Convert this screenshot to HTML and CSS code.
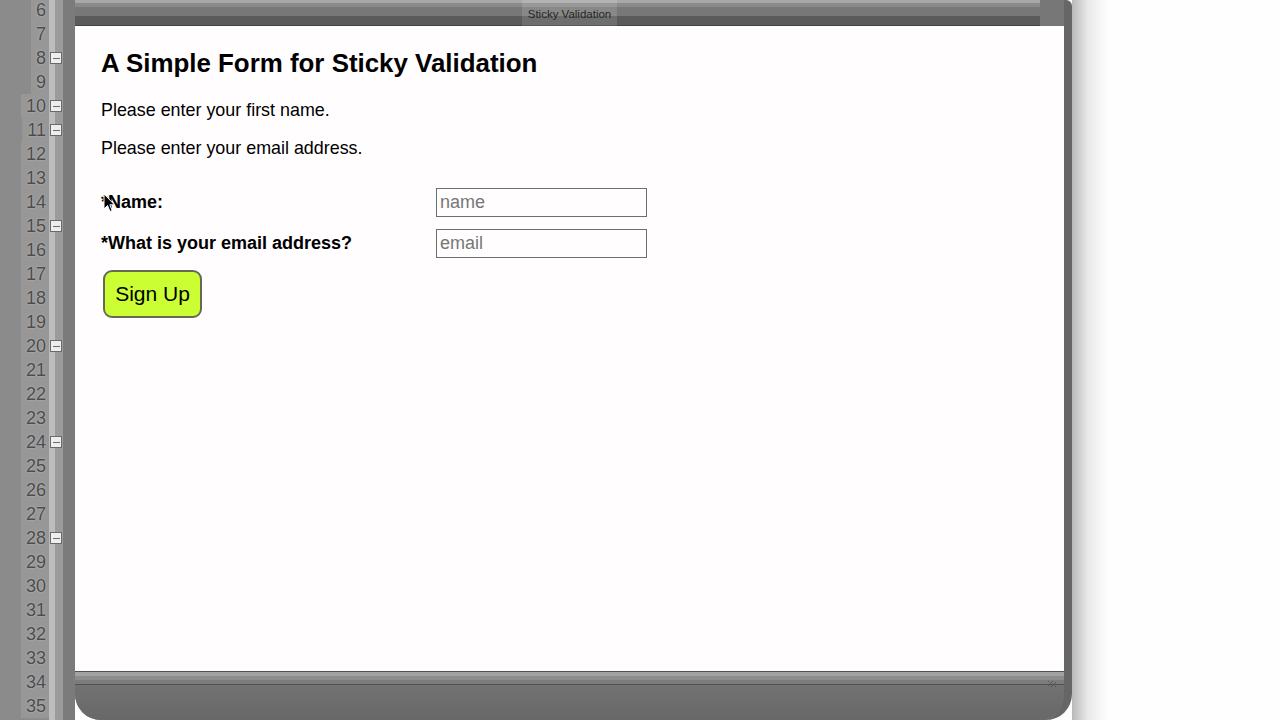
FILE: index.html
```html
<!DOCTYPE html>
<html lang="en">
  <head>
    <meta charset="UTF-8" />
    <meta name="viewport" content="width=device-width, initial-scale=1.0" />
    <title>Sticky Validation</title>
    <link rel="stylesheet" href="styles.css">
  </head>
  <body>
    <!-- Editor gutter behind the preview window -->
    <aside class="gutter">
      <div class="line-numbers">
        <div class="ln"><span>6</span></div>
        <div class="ln"><span>7</span></div>
        <div class="ln"><span>8</span></div>
        <div class="ln"><span>9</span></div>
        <div class="ln"><span>10</span></div>
        <div class="ln"><span>11</span></div>
        <div class="ln"><span>12</span></div>
        <div class="ln"><span>13</span></div>
        <div class="ln"><span>14</span></div>
        <div class="ln"><span>15</span></div>
        <div class="ln"><span>16</span></div>
        <div class="ln"><span>17</span></div>
        <div class="ln"><span>18</span></div>
        <div class="ln"><span>19</span></div>
        <div class="ln"><span>20</span></div>
        <div class="ln"><span>21</span></div>
        <div class="ln"><span>22</span></div>
        <div class="ln"><span>23</span></div>
        <div class="ln"><span>24</span></div>
        <div class="ln"><span>25</span></div>
        <div class="ln"><span>26</span></div>
        <div class="ln"><span>27</span></div>
        <div class="ln"><span>28</span></div>
        <div class="ln"><span>29</span></div>
        <div class="ln"><span>30</span></div>
        <div class="ln"><span>31</span></div>
        <div class="ln"><span>32</span></div>
        <div class="ln"><span>33</span></div>
        <div class="ln"><span>34</span></div>
        <div class="ln"><span>35</span></div>
      </div>
      <div class="fold-bar">
        <div class="fold"></div>
        <div class="fold"></div>
        <div class="fold"><i class="fold-mark"></i></div>
        <div class="fold"></div>
        <div class="fold"><i class="fold-mark"></i></div>
        <div class="fold"><i class="fold-mark"></i></div>
        <div class="fold"></div>
        <div class="fold"></div>
        <div class="fold"></div>
        <div class="fold"><i class="fold-mark"></i></div>
        <div class="fold"></div>
        <div class="fold"></div>
        <div class="fold"></div>
        <div class="fold"></div>
        <div class="fold"><i class="fold-mark"></i></div>
        <div class="fold"></div>
        <div class="fold"></div>
        <div class="fold"></div>
        <div class="fold"><i class="fold-mark"></i></div>
        <div class="fold"></div>
        <div class="fold"></div>
        <div class="fold"></div>
        <div class="fold"><i class="fold-mark"></i></div>
        <div class="fold"></div>
      </div>
      <div class="gutter-edge"></div>
    </aside>

    <!-- Preview window -->
    <div class="window">
      <div class="title-bar">
        <span class="title">Sticky Validation</span>
        <span class="title-end"></span>
      </div>

      <main class="page">
        <h1>A Simple Form for Sticky Validation</h1>
        <p class="notice">Please enter your first name.</p>
        <p class="notice">Please enter your email address.</p>

        <form class="signup" onsubmit="return false;">
          <label class="field-label" for="name">
            *Name:
            <svg class="cursor" width="13" height="20" viewBox="0 0 13 20">
              <path d="M1 1 L1 16 L4.5 12.5 L7 18.5 L9.2 17.6 L6.8 11.8 L11.5 11.8 Z" fill="#000" stroke="#fff" stroke-width="1"/>
            </svg>
          </label>
          <input class="field" id="name" type="text" placeholder="name">

          <label class="field-label" for="email">*What is your email address?</label>
          <input class="field" id="email" type="text" placeholder="email">

          <div class="actions">
            <button class="signup-btn" type="submit">Sign Up</button>
          </div>
        </form>
      </main>

      <div class="status-bar">
        <span class="grip"></span>
      </div>
    </div>

    <div class="shadow"></div>
  </body>
</html>
```

FILE: styles.css
```css
/* General Styling */
* {
  margin: 0;
  padding: 0;
  box-sizing: border-box;
}

body {
  width: 1280px;
  height: 720px;
  overflow: hidden;
  display: flex;
  background-color: #fefefe;
  font-family: "Liberation Sans", Arial, sans-serif;
}

/* Editor gutter */
.gutter {
  display: flex;
  height: 720px;
  background-color: #8b8b8b;
}

.line-numbers {
  width: 49px;
  margin-top: -2px;
}

.ln {
  height: 24px;
  display: flex;
  justify-content: flex-end;
}

.ln span {
  padding: 0 3px 0 5px;
  background-color: #979797;
  color: #4c4c4c;
  font-size: 18px;
  line-height: 24px;
  text-shadow: 0 0 2px #c4c4c4;
}

.fold-bar {
  width: 14px;
  margin-top: -2px;
  background: linear-gradient(to right, #bdbdbd 0 6px, #9b9b9b 6px 14px);
}

.fold {
  height: 24px;
  display: flex;
  align-items: center;
  padding-left: 1px;
}

.fold-mark {
  width: 12px;
  height: 12px;
  border: 1px solid #6a6a6a;
  background: linear-gradient(#6a6a6a, #6a6a6a) center / 7px 1px no-repeat, #eeeeee;
}

.gutter-edge {
  width: 12px;
  background-color: #7b7b7b;
}

/* Preview window */
.window {
  width: 997px;
  height: 720px;
  display: flex;
  flex-direction: column;
  border-right: 8px solid #666;
  border-radius: 0 6px 26px 26px;
  background-color: #6c6c6c;
}

.title-bar {
  height: 26px;
  display: flex;
  justify-content: center;
  position: relative;
  background: linear-gradient(
    to bottom,
    #a9a9a9 0 3px,
    #8a8a8a 3px 7px,
    #787878 7px 16px,
    #5b5b5b 16px 25px,
    #444 25px 26px
  );
}

.title {
  padding: 0 6px;
  font-size: 11.5px;
  line-height: 28px;
  color: #262626;
  background-color: rgba(255, 255, 255, 0.12);
}

.title-end {
  position: absolute;
  right: 0;
  top: 0;
  width: 24px;
  height: 26px;
  background-color: #777;
}

.page {
  flex: 1;
  padding: 22px 26px 0;
  background-color: #fffdfe;
  color: #000;
}

h1 {
  font-size: 25.9px;
  line-height: 30px;
  font-weight: bold;
  margin-bottom: 21px;
}

.notice {
  font-size: 17.9px;
  line-height: 22px;
  margin-bottom: 16px;
}

.signup {
  display: grid;
  grid-template-columns: 335px 211px;
  row-gap: 12px;
  margin-top: 29px;
}

.field-label {
  position: relative;
  align-self: center;
  font-size: 18px;
  font-weight: bold;
}

.cursor {
  position: absolute;
  left: 2px;
  top: 1px;
}

.field {
  width: 211px;
  height: 29px;
  padding: 0 3px;
  border: 1px solid #6e6e6e;
  background-color: #fffdfe;
  font-family: "Liberation Sans", Arial, sans-serif;
  font-size: 18px;
  color: #000;
  outline: none;
}

.field::placeholder {
  color: #767676;
}

.actions {
  grid-column: 1 / 3;
}

.signup-btn {
  width: 99px;
  height: 48px;
  margin-left: 2px;
  border: 2px solid #666a55;
  border-radius: 9px;
  background-color: #ccff33;
  font-family: "Liberation Sans", Arial, sans-serif;
  font-size: 21px;
  color: #000;
  cursor: pointer;
}

.status-bar {
  height: 49px;
  display: flex;
  justify-content: flex-end;
  align-items: flex-start;
  padding: 10px 8px 0 0;
  border-radius: 0 0 26px 26px;
  background: linear-gradient(
    to bottom,
    #4f4f4f 0 1px,
    #a2a2a2 1px 5px,
    #8c8c8c 5px 9px,
    #7c7c7c 9px 13px,
    #505050 13px 14px,
    #727272 14px,
    #686868 100%
  );
}

.grip {
  width: 8px;
  height: 6px;
  background: repeating-linear-gradient(135deg, #555 0 1px, transparent 1px 3px);
}

.shadow {
  width: 36px;
  height: 720px;
  background: linear-gradient(to right, #b9b9b9, #e9e9e9 45%, #fefefe);
}
```
